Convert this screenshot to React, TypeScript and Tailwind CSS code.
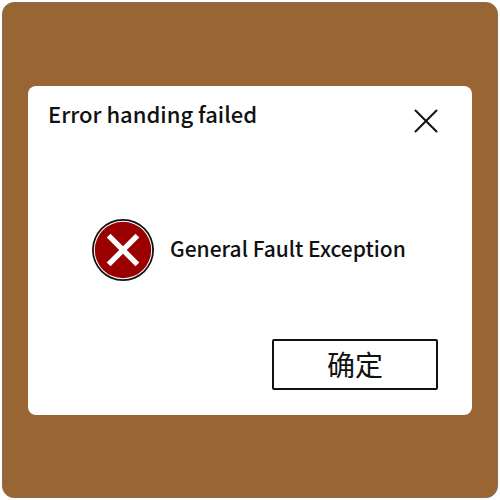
import { useState } from 'react'

function CloseIcon() {
  return (
    <svg viewBox="0 0 24 24" className="w-6 h-6" fill="none" stroke="#111" strokeWidth="2" strokeLinecap="round" aria-hidden="true">
      <path d="M1.5 1.5 22.5 22.5M22.5 1.5 1.5 22.5" />
    </svg>
  )
}

function ErrorIcon() {
  return (
    <svg viewBox="0 0 62 62" className="w-[62px] h-[62px] shrink-0" aria-hidden="true">
      <circle cx="31" cy="31" r="31" fill="#101010" />
      <circle cx="31" cy="31" r="29.2" fill="#fff" />
      <circle cx="31" cy="31" r="28.2" fill="#9b0000" />
      <path d="M16.6 16.6 45.4 45.4M45.4 16.6 16.6 45.4" stroke="#fff" strokeWidth="5.4" />
    </svg>
  )
}

export default function App() {
  const [open, setOpen] = useState(true)

  return (
    <div className="flex min-h-screen bg-white p-0.5 font-['Noto_Sans_CJK_SC',sans-serif] text-[#111]">
      <main className="flex flex-1 items-center rounded-xl border border-[#857057] bg-[#996633] px-[25px]">
        {open && (
          <div role="dialog" aria-labelledby="title" aria-describedby="message" className="w-full rounded-lg bg-white pb-[25px]">
            <div className="flex items-start justify-between pl-5 pr-[34px] pt-[11px]">
              <h1 id="title" className="text-[22px] leading-8 font-medium">Error handing failed</h1>
              <button type="button" aria-label="Close" onClick={() => setOpen(false)} className="mt-3">
                <CloseIcon />
              </button>
            </div>

            <div className="flex items-center gap-4 px-16 pt-[86px]">
              <ErrorIcon />
              <p id="message" className="pb-1 text-[21px] leading-8 font-medium whitespace-nowrap">General Fault Exception</p>
            </div>

            <div className="flex justify-end pr-[34px] pt-[58px]">
              <button
                type="button"
                onClick={() => setOpen(false)}
                className="h-[51px] w-[166px] rounded-xs border-2 border-[#111] text-[28px] leading-8"
              >
                确定
              </button>
            </div>
          </div>
        )}
      </main>
    </div>
  )
}
